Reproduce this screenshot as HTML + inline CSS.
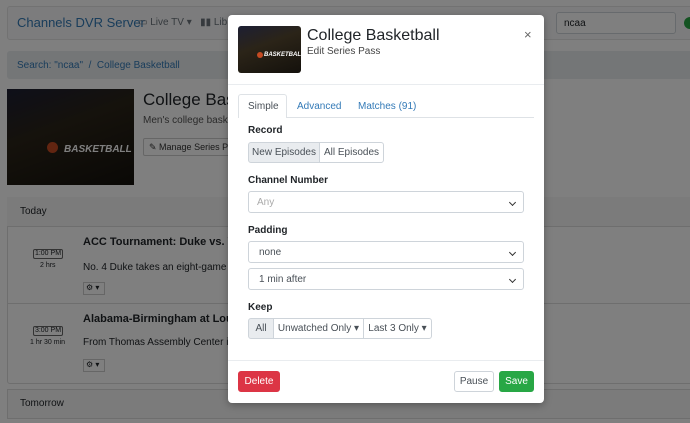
<!DOCTYPE html>
<html><head><style>
*{box-sizing:border-box;margin:0;padding:0}
body{width:690px;height:423px;overflow:hidden;font-family:"Liberation Sans",sans-serif;background:#fff;position:relative;font-size:11px;color:#212529}
.abs{position:absolute;white-space:nowrap}
.ov{position:absolute;inset:0;background:rgba(0,0,0,.5)}
.img{background:linear-gradient(160deg,#1d1f33 0%,#2b2418 40%,#14110c 100%);overflow:hidden}
.modal{position:absolute;left:228px;top:15px;width:316px;height:388px;background:#fff;border-radius:4px;box-shadow:0 2px 8px rgba(0,0,0,.3)}
.lbl{position:absolute;left:20px;font-weight:bold;font-size:10px;color:#212529}
.btn{position:absolute;border:1px solid #ced4da;font-size:10px;display:flex;align-items:center;justify-content:center;background:#fff;color:#495057;white-space:nowrap}
.sel{position:absolute;left:20px;width:276px;height:22px;border:1px solid #ced4da;border-radius:3px;font-size:10px;color:#495057;padding-left:10px;display:flex;align-items:center}
.sel:after{content:"";position:absolute;right:8px;top:8px;width:4px;height:4px;border-right:1px solid #333;border-bottom:1px solid #333;transform:rotate(45deg)}
</style></head><body>
<div class="abs" style="left:7px;top:6px;width:690px;height:34px;background:#f8f9fa;border:1px solid #e5e5e5;border-radius:3px"></div>
<div class="abs" style="left:17px;top:15px;font-size:13px;color:#337ab7">Channels DVR Server</div>
<div class="abs" style="left:138px;top:17px;font-size:10px;color:#6c757d">▭ Live TV ▾ &nbsp; ▮▮ Lib</div>
<div class="abs" style="left:556px;top:12px;width:120px;height:22px;border:1px solid #ced4da;border-radius:3px;background:#fff;font-size:10px;padding:5px 7px">ncaa</div>
<div class="abs" style="left:684px;top:17px;width:12px;height:12px;border-radius:50%;background:#28a745"></div>
<div class="abs" style="left:7px;top:51px;width:690px;height:28px;background:#e9ecef;border-radius:3px"></div>
<div class="abs" style="left:17px;top:60px;font-size:10px;color:#337ab7">Search: "ncaa" &nbsp;/&nbsp; College Basketball</div>
<div class="abs img" style="left:7px;top:89px;width:127px;height:96px"><div class="abs" style="left:57px;top:55px;color:#fff;font-weight:bold;font-style:italic;font-size:10px">BASKETBALL</div><div class="abs" style="left:40px;top:53px;width:11px;height:11px;border-radius:50%;background:#c44a22"></div></div>
<div class="abs" style="left:143px;top:90px;font-size:17px">College Bas</div>
<div class="abs" style="left:143px;top:115px;font-size:10px;color:#555">Men's college basket</div>
<div class="abs" style="left:143px;top:138px;width:90px;height:18px;border:1px solid #ccc;border-radius:2px;font-size:9px;padding:3px 5px;color:#333;overflow:hidden">✎ Manage Series Pass</div>
<div class="abs" style="left:7px;top:197px;width:690px;height:187px;border:1px solid #ddd;border-radius:3px"></div>
<div class="abs" style="left:7px;top:197px;width:690px;height:30px;background:#f7f7f7;border-bottom:1px solid #ddd"></div>
<div class="abs" style="left:20px;top:206px;font-size:10px">Today</div>
<div class="abs" style="left:33px;top:249px;width:30px;height:10px;border:1px solid #666;border-radius:2px;font-size:7px;text-align:center">1:00 PM</div>
<div class="abs" style="left:40px;top:262px;font-size:7px">2 hrs</div>
<div class="abs" style="left:83px;top:236px;font-size:11px;font-weight:bold">ACC Tournament: Duke vs. Virgi</div>
<div class="abs" style="left:83px;top:262px;font-size:10px">No. 4 Duke takes an eight-game wir</div>
<div class="abs" style="left:83px;top:282px;width:22px;height:13px;border:1px solid #ccc;font-size:8px;padding-left:2px">⚙ ▾</div>
<div class="abs" style="left:7px;top:303px;width:690px;border-top:1px solid #ddd"></div>
<div class="abs" style="left:33px;top:326px;width:30px;height:10px;border:1px solid #666;border-radius:2px;font-size:7px;text-align:center">3:00 PM</div>
<div class="abs" style="left:30px;top:339px;font-size:7px">1 hr 30 min</div>
<div class="abs" style="left:83px;top:313px;font-size:11px;font-weight:bold">Alabama-Birmingham at Louisia</div>
<div class="abs" style="left:83px;top:337px;font-size:10px">From Thomas Assembly Center in Ru</div>
<div class="abs" style="left:83px;top:359px;width:22px;height:13px;border:1px solid #ccc;font-size:8px;padding-left:2px">⚙ ▾</div>
<div class="abs" style="left:7px;top:389px;width:690px;height:30px;background:#f7f7f7;border:1px solid #ddd"></div>
<div class="abs" style="left:20px;top:398px;font-size:10px">Tomorrow</div>
<div class="ov"></div>
<div class="modal">
<div class="abs img" style="left:10px;top:11px;width:63px;height:47px;border-radius:3px"><div class="abs" style="left:26px;top:26px;color:#fff;font-weight:bold;font-style:italic;font-size:6px">BASKETBALL</div><div class="abs" style="left:19px;top:26px;width:6px;height:6px;border-radius:50%;background:#c44a22"></div></div>
<div class="abs" style="left:79px;top:12px;font-size:16px">College Basketball</div>
<div class="abs" style="left:79px;top:31px;font-size:10px;color:#444">Edit Series Pass</div>
<div class="abs" style="left:296px;top:12px;font-size:13px;color:#666">×</div>
<div class="abs" style="left:0;top:69px;width:316px;border-top:1px solid #e9ecef"></div>
<div class="abs" style="left:10px;top:102px;width:296px;border-top:1px solid #dee2e6"></div>
<div class="abs" style="left:10px;top:79px;width:49px;height:24px;background:#fff;border:1px solid #dee2e6;border-bottom:none;border-radius:3px 3px 0 0"></div>
<div class="abs" style="left:20px;top:86px;font-size:10px;color:#495057">Simple</div>
<div class="abs" style="left:69px;top:86px;font-size:10px;color:#337ab7">Advanced</div>
<div class="abs" style="left:130px;top:86px;font-size:10px;color:#337ab7">Matches (91)</div>
<div class="lbl" style="top:110px">Record</div>
<div class="btn" style="left:20px;top:127px;width:72px;height:21px;background:#e9ecef;border-radius:3px 0 0 3px">New Episodes</div>
<div class="btn" style="left:91px;top:127px;width:65px;height:21px;border-radius:0 3px 3px 0">All Episodes</div>
<div class="lbl" style="top:160px">Channel Number</div>
<div class="sel" style="top:176px;color:#aaa;padding-left:8px">Any</div>
<div class="lbl" style="top:210px">Padding</div>
<div class="sel" style="top:226px">none</div>
<div class="sel" style="top:253px">1 min after</div>
<div class="lbl" style="top:287px">Keep</div>
<div class="btn" style="left:20px;top:303px;width:26px;height:21px;background:#e9ecef;border-radius:3px 0 0 3px">All</div>
<div class="btn" style="left:45px;top:303px;width:91px;height:21px">Unwatched Only ▾</div>
<div class="btn" style="left:135px;top:303px;width:69px;height:21px;border-radius:0 3px 3px 0">Last 3 Only ▾</div>
<div class="abs" style="left:0;top:345px;width:316px;border-top:1px solid #e9ecef"></div>
<div class="btn" style="left:10px;top:356px;width:42px;height:21px;background:#dc3545;border-color:#dc3545;color:#fff;border-radius:3px">Delete</div>
<div class="btn" style="left:226px;top:356px;width:40px;height:21px;border-radius:3px">Pause</div>
<div class="btn" style="left:271px;top:356px;width:35px;height:21px;background:#28a745;border-color:#28a745;color:#fff;border-radius:3px">Save</div>
</div>
</body></html>
